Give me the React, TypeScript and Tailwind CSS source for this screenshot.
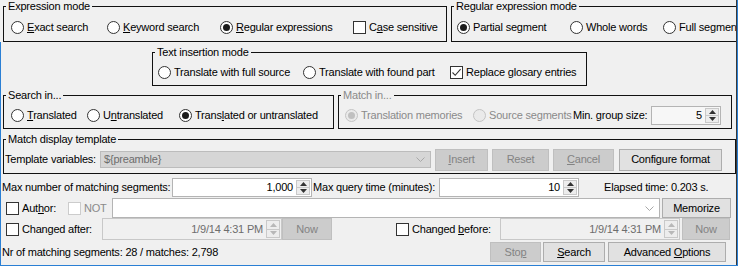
import type { ReactNode } from 'react';

function Radio({ checked, disabled }: { checked?: boolean; disabled?: boolean }) {
  return (
    <span
      className={`flex size-[13px] shrink-0 items-center justify-center rounded-full border ${
        disabled ? 'border-[#c4c4c4] bg-[#eaeaea]' : 'border-[#333333] bg-white'
      }`}
    >
      {checked && (
        <span className={`size-[7px] rounded-full ${disabled ? 'bg-[#c0c0c0]' : 'bg-[#1b1b1b]'}`} />
      )}
    </span>
  );
}

function Check({ checked, disabled }: { checked?: boolean; disabled?: boolean }) {
  return (
    <span
      className={`flex size-[13px] shrink-0 items-center justify-center border bg-white ${
        disabled ? 'border-[#cccccc]' : 'border-[#333333]'
      }`}
    >
      {checked && (
        <svg width="11" height="11" viewBox="0 0 11 11">
          <path d="M1.5 5.5 L4.2 8.3 L9.6 2.2" fill="none" stroke="#333" strokeWidth="1.1" />
        </svg>
      )}
    </span>
  );
}

function Option({
  kind,
  checked,
  disabled,
  width,
  children,
}: {
  kind: 'radio' | 'check';
  checked?: boolean;
  disabled?: boolean;
  width?: string;
  children: ReactNode;
}) {
  return (
    <div className={`flex shrink-0 items-center ${width ?? ''}`}>
      {kind === 'radio' ? (
        <Radio checked={checked} disabled={disabled} />
      ) : (
        <Check checked={checked} disabled={disabled} />
      )}
      <span className={`ml-[3px] whitespace-nowrap ${disabled ? 'text-[#8a8a8a]' : ''}`}>{children}</span>
    </div>
  );
}

function Group({
  title,
  disabled,
  className,
  children,
}: {
  title: string;
  disabled?: boolean;
  className: string;
  children: ReactNode;
}) {
  return (
    <fieldset className={`shrink-0 border border-[#111111] ${className}`}>
      <legend className={`ml-[2px] px-[2px] leading-[13px] ${disabled ? 'text-[#8a8a8a]' : ''}`}>{title}</legend>
      {children}
    </fieldset>
  );
}

function Arrow({ up, color }: { up?: boolean; color: string }) {
  return (
    <svg width="7" height="4" viewBox="0 0 7 4">
      <path d={up ? 'M0 4 L3.5 0 L7 4Z' : 'M0 0 L3.5 4 L7 0Z'} fill={color} />
    </svg>
  );
}

function Spin({ disabled }: { disabled?: boolean }) {
  const c = disabled ? '#b8b8b8' : '#333333';
  return (
    <div className="flex w-[15px] shrink-0 flex-col self-stretch py-px pr-px">
      <div className="flex flex-1 items-center justify-center border border-[#c9c9c9] bg-[#ededed]">
        <Arrow up color={c} />
      </div>
      <div className="flex flex-1 items-center justify-center border border-t-0 border-[#c9c9c9] bg-[#ededed]">
        <Arrow color={c} />
      </div>
    </div>
  );
}

function Chevron({ color }: { color: string }) {
  return (
    <svg width="9" height="5" viewBox="0 0 9 5">
      <path d="M0.5 0.5 L4.5 4.5 L8.5 0.5" fill="none" stroke={color} strokeWidth="1" />
    </svg>
  );
}

function Button({
  width,
  height,
  disabled,
  children,
}: {
  width: string;
  height: string;
  disabled?: boolean;
  children: ReactNode;
}) {
  return (
    <div
      className={`flex shrink-0 items-center justify-center border ${width} ${height} ${
        disabled ? 'border-[#bfbfbf] bg-[#cccccc] text-[#838383]' : 'border-[#adadad] bg-[#e1e1e1]'
      }`}
    >
      <span className="whitespace-nowrap">{children}</span>
    </div>
  );
}

function SpinField({ value, width, height, bg }: { value: string; width: string; height: string; bg: string }) {
  return (
    <div className={`flex shrink-0 items-center border border-[#b4b4b4] ${bg} ${width} ${height}`}>
      <span className="flex-1 pr-[3px] text-right">{value}</span>
      <Spin />
    </div>
  );
}

function DateField() {
  return (
    <div className="flex h-[22px] w-[180px] shrink-0 items-center border border-[#c8c8c8] bg-[#f0f0f0] text-[#6d6d6d]">
      <span className="flex-1 pr-[3px] text-right">1/9/14 4:31 PM</span>
      <Spin disabled />
    </div>
  );
}

export default function App() {
  return (
    <div className="flex h-[266px] w-[738px] flex-col overflow-hidden bg-[#f0f0f0] font-[family-name:Liberation_Sans,Arial,sans-serif] text-[11px] leading-[13px] tracking-[-0.2px] text-black">
      <div className="flex h-[265px]">
        <div className="flex w-px shrink-0 flex-col">
          <div className="h-[42px]" />
          <div className="flex-1 bg-[#2a7fd4]" />
        </div>

        <div className="flex w-[735px] shrink-0 flex-col overflow-hidden">
          {/* expression mode / regular expression mode */}
          <div className="flex h-[42px]">
            <Group title="Expression mode" className="ml-[2px] h-[42px] w-[444px]">
              <div className="flex h-[28px] items-center pl-[7px]">
                <Option kind="radio" width="w-[96px]">
                  <u>E</u>xact search
                </Option>
                <Option kind="radio" width="w-[113px]">
                  <u>K</u>eyword search
                </Option>
                <Option kind="radio" checked width="w-[133px]">
                  <u>R</u>egular expressions
                </Option>
                <Option kind="check">
                  C<u>a</u>se sensitive
                </Option>
              </div>
            </Group>
            <Group title="Regular expression mode" className="ml-[4px] h-[42px] w-[330px]">
              <div className="flex h-[28px] items-center pl-[5px]">
                <Option kind="radio" checked width="w-[113px]">
                  Partial segment
                </Option>
                <Option kind="radio" width="w-[93px]">
                  Whole words
                </Option>
                <Option kind="radio">Full segment</Option>
              </div>
            </Group>
          </div>

          {/* text insertion mode */}
          <div className="flex pt-[4px]">
            <Group title="Text insertion mode" className="ml-[151px] h-[40px] w-[435px]">
              <div className="flex h-[26px] items-center pl-[5px]">
                <Option kind="radio" width="w-[145px]">
                  Translate with full source
                </Option>
                <Option kind="radio" width="w-[147px]">
                  Translate with found part
                </Option>
                <Option kind="check" checked>
                  Replace glosary entries
                </Option>
              </div>
            </Group>
          </div>

          {/* search in / match in */}
          <div className="mt-[3px] flex">
            <Group title="Search in..." className="ml-[2px] h-[40px] w-[331px]">
              <div className="flex h-[26px] items-center pl-[7px]">
                <Option kind="radio" width="w-[76px]">
                  <u>T</u>ranslated
                </Option>
                <Option kind="radio" width="w-[92px]">
                  U<u>n</u>translated
                </Option>
                <Option kind="radio" checked>
                  Trans<u>l</u>ated or untranslated
                </Option>
              </div>
            </Group>
            <Group title="Match in..." disabled className="ml-[4px] h-[40px] w-[394px]">
              <div className="flex h-[26px] items-center pl-[6px]">
                <Option kind="radio" checked disabled width="w-[128px]">
                  Translation memories
                </Option>
                <Option kind="radio" disabled width="w-[100px]">
                  Source segments
                </Option>
                <span className="w-[78px] shrink-0 whitespace-nowrap">Min. group size:</span>
                <SpinField value="5" width="w-[70px]" height="h-[19px]" bg="bg-[#f7f7f7]" />
              </div>
            </Group>
          </div>

          {/* match display template */}
          <div className="mt-[4px] flex">
            <Group title="Match display template" className="ml-[2px] h-[41px] w-[733px]">
              <div className="flex h-[27px] items-center pl-px">
                <span className="w-[95px] shrink-0 whitespace-nowrap">Template variables:</span>
                <div className="flex h-[17px] w-[331px] shrink-0 items-center border border-[#bcbcbc] bg-[#d6d6d6] pl-[3px] pr-[5px] text-[#6d6d6d]">
                  <span className="flex-1">{'${preamble}'}</span>
                  <Chevron color="#a8a8a8" />
                </div>
                <div className="ml-[4px] flex items-center gap-[4px]">
                  <Button width="w-[53px]" height="h-[22px]" disabled>
                    <u>I</u>nsert
                  </Button>
                  <Button width="w-[57px]" height="h-[22px]" disabled>
                    Reset
                  </Button>
                  <Button width="w-[61px]" height="h-[22px]" disabled>
                    <u>C</u>ancel
                  </Button>
                  <div className="ml-px">
                    <Button width="w-[103px]" height="h-[22px]">
                      Configure format
                    </Button>
                  </div>
                </div>
              </div>
            </Group>
          </div>

          {/* limits */}
          <div className="mt-[4px] flex h-[19px] items-center">
            <span className="w-[171px] shrink-0 whitespace-nowrap pl-px">Max number of matching segments:</span>
            <SpinField value="1,000" width="w-[140px]" height="h-[19px]" bg="bg-white" />
            <span className="ml-px w-[126px] shrink-0 whitespace-nowrap">Max query time (minutes):</span>
            <SpinField value="10" width="w-[140px]" height="h-[19px]" bg="bg-white" />
            <span className="ml-[25px] whitespace-nowrap">Elapsed time: 0.203 s.</span>
          </div>

          {/* author */}
          <div className="mt-px flex h-[20px] items-center pl-[5px]">
            <Option kind="check" width="w-[62px]">
              Aut<u>h</u>or:
            </Option>
            <Option kind="check" disabled width="w-[44px]">
              NOT
            </Option>
            <div className="flex h-[20px] w-[548px] shrink-0 items-center justify-end border border-[#b4b4b4] bg-white pr-[5px]">
              <Chevron color="#a8a8a8" />
            </div>
            <div className="ml-[2px]">
              <Button width="w-[69px]" height="h-[20px]">
                Memorize
              </Button>
            </div>
          </div>

          {/* changed after / before */}
          <div className="flex h-[22px] items-center pl-[5px]">
            <Option kind="check" width="w-[96px]">
              Changed after:
            </Option>
            <DateField />
            <Button width="w-[50px]" height="h-[22px]" disabled>
              Now
            </Button>
            <div className="ml-[64px]">
              <Option kind="check" width="w-[104px]">
                Changed <u>b</u>efore:
              </Option>
            </div>
            <DateField />
            <div className="ml-[2px]">
              <Button width="w-[48px]" height="h-[22px]" disabled>
                Now
              </Button>
            </div>
          </div>

          {/* status + actions */}
          <div className="mt-[2px] flex h-[20px] items-center">
            <span className="w-[489px] shrink-0 whitespace-nowrap pl-px">
              Nr of matching segments: 28 / matches: 2,798
            </span>
            <Button width="w-[51px]" height="h-[20px]" disabled>
              Sto<u>p</u>
            </Button>
            <div className="ml-[2px]">
              <Button width="w-[62px]" height="h-[20px]">
                <u>S</u>earch
              </Button>
            </div>
            <div className="ml-[3px]">
              <Button width="w-[118px]" height="h-[20px]">
                Advanced <u>O</u>ptions
              </Button>
            </div>
          </div>
        </div>

        <div className="w-px shrink-0 bg-[#3a3a3a]" />
        <div className="w-px shrink-0 bg-[#2a7fd4]" />
      </div>
      <div className="h-px bg-[#2a7fd4]" />
    </div>
  );
}
